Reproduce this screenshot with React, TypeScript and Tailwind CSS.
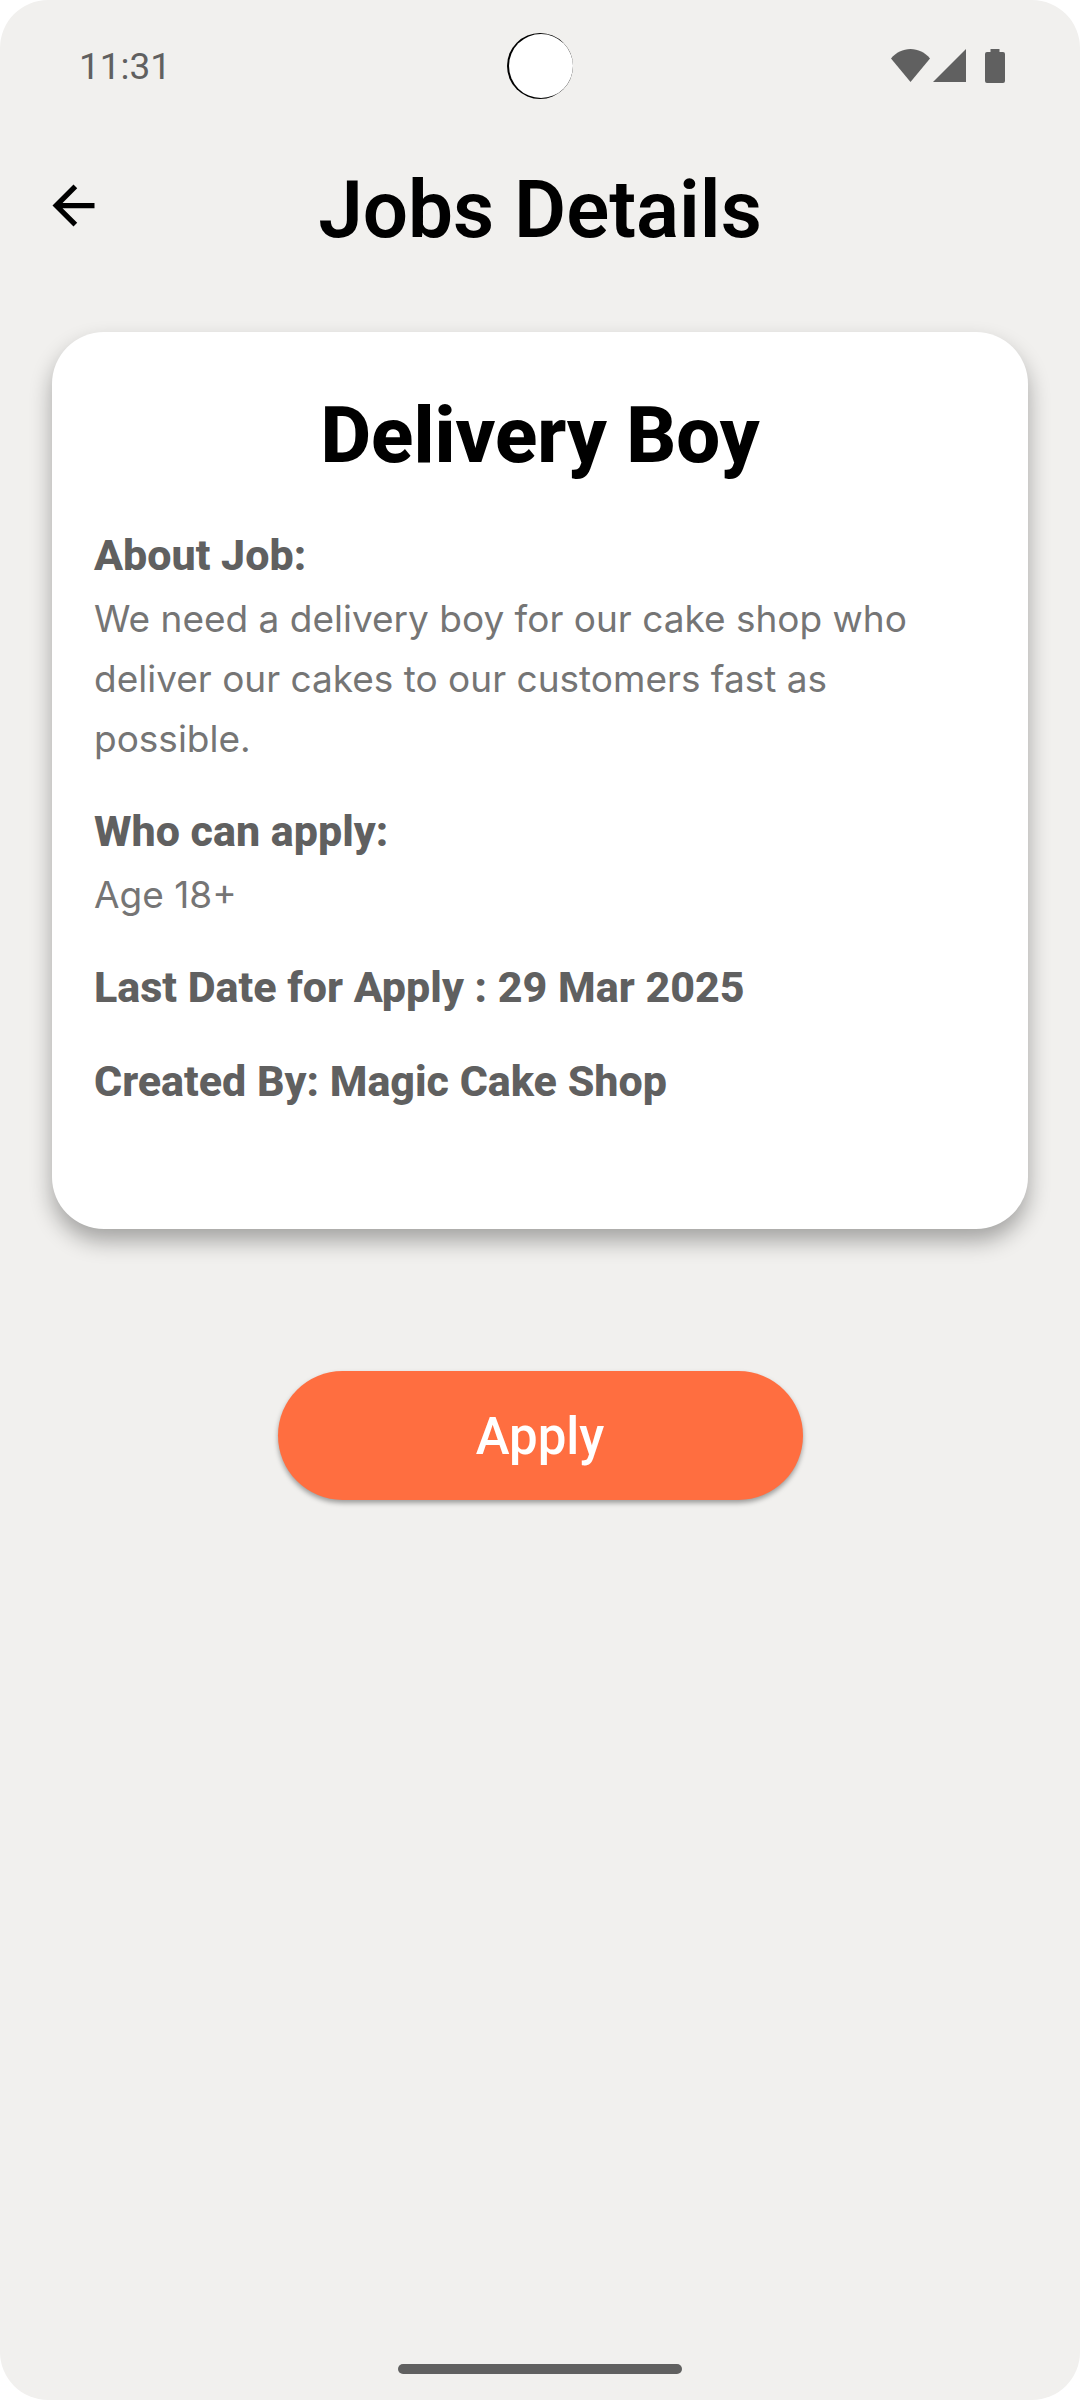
import React from "react";

function StatusBar() {
  return (
    <div className="relative flex h-33 items-center justify-between pr-[75px] pl-[79px] text-[#606060]">
      <time className="pt-px font-[Roboto,sans-serif] text-[37px] leading-10">11:31</time>
      <div className="absolute top-[33px] left-1/2 size-[66px] -translate-x-1/2 rounded-full bg-black">
        <div className="ml-[2px] mt-px size-16 rounded-full bg-white" />
      </div>
      <div className="flex items-center" aria-hidden="true">
        <svg className="mr-[3px] h-[34px] w-[39px]" viewBox="0 0 39 34" fill="currentColor">
          <path d="M19.500 33L0 9.500C5 3.500 12 0 19.500 0S34 3.500 39 9.500z" />
        </svg>
        <svg className="mr-[19px] h-[34px] w-[33px]" viewBox="0 0 33 34" fill="currentColor">
          <path d="M33 0v33H0z" />
        </svg>
        <svg className="h-[34px] w-5" viewBox="0 0 20 34" fill="currentColor">
          <path d="M5.500 0h9v3H18a2 2 0 0 1 2 2v27a2 2 0 0 1-2 2H2a2 2 0 0 1-2-2V5a2 2 0 0 1 2-2h3.500z" />
        </svg>
      </div>
    </div>
  );
}

function Header() {
  return (
    <header className="relative flex justify-center pt-8">
      <button type="button" aria-label="Back" className="absolute left-[42px] flex h-[82px] items-center">
        <svg className="size-[63px]" viewBox="0 0 24 24" fill="currentColor">
          <path d="M20 11H7.830l5.590-5.590L12 4l-8 8 8 8 1.410-1.410L7.830 13H20v-2z" />
        </svg>
      </button>
      <h1 className="font-[Roboto,sans-serif] text-[80px] leading-[92px] font-semibold">Jobs Details</h1>
    </header>
  );
}

function SectionTitle({ children }: { children: React.ReactNode }) {
  return (
    <h3 className="font-[Roboto,sans-serif] text-[43px] leading-[52px] font-extrabold text-[#606060]">{children}</h3>
  );
}

function SectionText({ children }: { children: React.ReactNode }) {
  return <p className="mt-2 text-[37px] leading-[60px] text-[#757575]">{children}</p>;
}

export default function App() {
  return (
    <div className="min-h-screen bg-white font-[Inter,sans-serif] text-black">
      <div className="flex min-h-screen flex-col rounded-[48px] bg-[#f1f0ee]">
        <StatusBar />
        <Header />
        <main className="flex flex-1 flex-col items-center px-[52px] pt-[76px]">
          <section className="w-full rounded-[52px] bg-white px-[42px] pt-[60px] pb-[122px] shadow-[0_12px_22px_rgba(0,0,0,0.32)]">
            <h2 className="text-center font-[Roboto,sans-serif] text-[78px] leading-[88px] font-extrabold">Delivery Boy</h2>
            <div className="mt-[49px] flex flex-col gap-9">
              <div>
                <SectionTitle>About Job:</SectionTitle>
                <SectionText>
                  We need a delivery boy for our cake shop who deliver our cakes to our customers fast as possible.
                </SectionText>
              </div>
              <div>
                <SectionTitle>Who can apply:</SectionTitle>
                <SectionText>Age 18+</SectionText>
              </div>
              <div className="flex flex-col gap-[42px]">
                <SectionTitle>Last Date for Apply : 29 Mar 2025</SectionTitle>
                <SectionTitle>Created By: Magic Cake Shop</SectionTitle>
              </div>
            </div>
          </section>
          <button
            type="button"
            className="mt-[142px] h-[129px] w-[525px] rounded-full bg-[#ff6e40] pt-1 font-[Roboto,sans-serif] text-[51px] font-medium text-white shadow-[0_3px_5px_rgba(0,0,0,0.35)]"
          >
            Apply
          </button>
        </main>
        <footer className="flex justify-center pb-[26px]">
          <div className="h-[10px] w-[284px] rounded-full bg-[#606060]" />
        </footer>
      </div>
    </div>
  );
}
